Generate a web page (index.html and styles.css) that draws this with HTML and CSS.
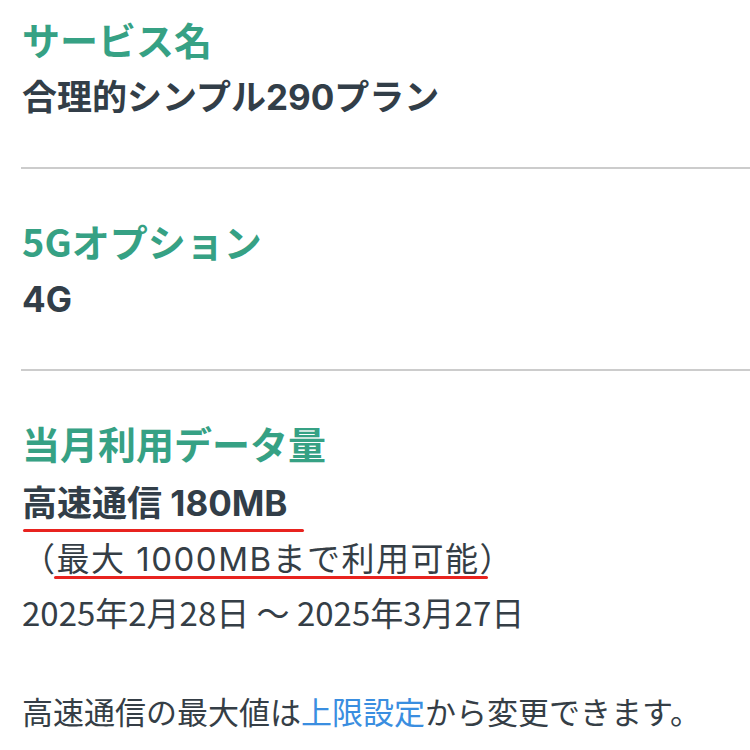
FILE: index.html
```html
<!DOCTYPE html>
<html lang="ja">
<head>
<meta charset="utf-8">
<title>ご契約内容</title>
<link rel="stylesheet" href="styles.css">
</head>
<body>
<main class="detail">
  <section class="item">
    <h2 class="label">サービス名</h2>
    <p class="value">合理的シンプル290プラン</p>
  </section>
  <section class="item">
    <h2 class="label">5Gオプション</h2>
    <p class="value">4G</p>
  </section>
  <section class="item item-usage">
    <h2 class="label">当月利用データ量</h2>
    <p class="value value-usage"><span class="mark mark-main">高速通信 180MB</span></p>
    <p class="sub sub-limit">（<span class="mark mark-sub">最大 1000MBまで利用可能</span>）</p>
    <p class="sub">2025年2月28日 〜 2025年3月27日</p>
    <p class="note">高速通信の最大値は<a class="link" href="#">上限設定</a>から変更できます。</p>
  </section>
</main>
</body>
</html>
```

FILE: styles.css
```css
html, body {
  margin: 0;
  padding: 0;
  background: #ffffff;
}

body {
  font-family: "Noto Sans CJK JP", "Noto Sans", sans-serif;
  color: #323e48;
  width: 750px;
  height: 750px;
  overflow: hidden;
}

.detail {
  padding-left: 21px;
}

.item {
  padding: 44px 0 40px 1px;
  border-bottom: 2px solid #cccccc;
}

.item:first-child {
  padding-top: 11px;
}

.item-usage {
  border-bottom: none;
  padding-bottom: 0;
}

.label {
  margin: 0;
  font-size: 38px;
  line-height: 56px;
  font-weight: 700;
  color: #36a184;
}

.value {
  margin: 0;
  font-family: Inter, "Noto Sans CJK JP", sans-serif;
  font-size: 35px;
  line-height: 60px;
  font-weight: 700;
  color: #323e48;
}

.value-usage {
  margin-top: 2px;
}

.sub {
  margin: 0;
  font-size: 33px;
  line-height: 53px;
  font-weight: 400;
  color: #353e46;
}

.sub-limit {
  font-family: Inter, "Noto Sans CJK JP", sans-serif;
  letter-spacing: 1.5px;
}

.note {
  margin: 45px 0 0;
  font-size: 31px;
  line-height: 53px;
  font-weight: 400;
  color: #353e46;
}

.link {
  color: #3a8ee0;
  text-decoration: none;
}

.mark {
  position: relative;
}

.mark::after {
  content: "";
  position: absolute;
  height: 3px;
  border-radius: 2px;
  background: #e8231f;
}

.mark-main::after {
  left: 1px;
  right: -16px;
  bottom: -8px;
}

.mark-sub::after {
  left: -3px;
  right: -8px;
  bottom: 0;
}
```
